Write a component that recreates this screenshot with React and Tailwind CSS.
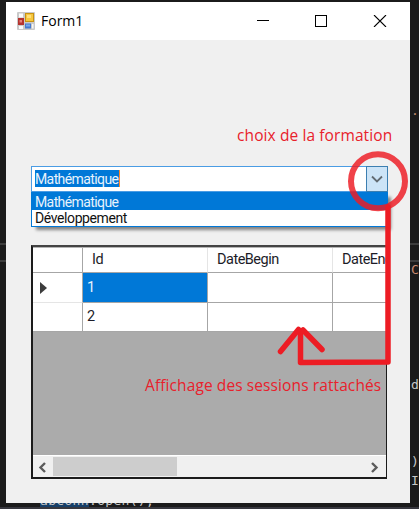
const ui = "font-['Roboto','Liberation_Sans',sans-serif]";
const note = "font-['Open_Sans','Noto_Sans',sans-serif]";

function FormIcon() {
  return (
    <svg width="18" height="18" viewBox="0 0 18 18" className="shrink-0">
      <rect width="18" height="18" rx="1" fill="#c9c9c9" />
      <rect x="2" y="1.5" width="4" height="4" fill="#fafafa" />
      <rect x="1" y="6" width="6" height="7" fill="#b5332e" />
      <rect x="2.5" y="8" width="2.5" height="2.5" fill="#e58078" />
      <rect x="8" y="1" width="9" height="9" fill="#c99312" />
      <rect x="9" y="2" width="7" height="7" fill="#f6c73f" />
      <rect x="10" y="3" width="4" height="3" fill="#ffe078" />
      <rect x="2" y="14" width="4" height="3" fill="#fafafa" />
      <rect x="8" y="11.5" width="6" height="5" fill="#447ad0" />
      <rect x="9" y="12.5" width="4" height="2" fill="#78a8ec" />
      <rect x="15" y="12" width="1.5" height="4.5" fill="#f6f6f6" />
    </svg>
  );
}

function TitleBar() {
  return (
    <div className="flex h-[38px] items-center bg-white pl-[11px]">
      <FormIcon />
      <span className={`${note} ml-1.5 w-[52px] text-[14px] leading-5 text-black`}>Form1</span>
      <svg width="130" height="12" viewBox="0 0 130 12" className="ml-[164px]" fill="none" stroke="#000" shapeRendering="crispEdges">
        <path d="M0 5.5h12M58.5 .5h11v11h-11z" />
        <path d="M117 0l12 12M129 0l-12 12" shapeRendering="auto" strokeWidth="1.1" />
      </svg>
    </div>
  );
}

function Combo() {
  return (
    <div className={`${ui} w-[357px] text-[14px]`}>
      <div className="flex h-[26px] border border-[#4a9ce4] bg-white">
        <div className="flex-1 pt-[3px] pl-[3px]">
          <span className="block h-[17px] w-[85px] border-r border-[#ff8728] bg-[#0078d7] leading-[18px] tracking-[-0.6px] whitespace-nowrap text-[#e8f3fc]">Mathématique</span>
        </div>
        <div className="-my-px -mr-px flex w-[22px] items-center justify-center border border-[#3c7fb1] bg-[#cce4f7]">
          <svg width="12" height="8" viewBox="0 0 12 8" fill="none" stroke="#626b72" strokeWidth="1.8">
            <path d="M1 1.5l5 5 5-5" />
          </svg>
        </div>
      </div>
      <div className="h-[35px] border border-t-0 border-[#0078d7] bg-white shadow-[4px_4px_3px_-1px_rgba(0,0,0,0.45)]">
        <div className="h-[18px] bg-[#0078d7] pl-[3px] leading-[20px] tracking-[-0.6px] text-[#e8f3fc]">Mathématique</div>
        <div className="h-4 pl-[3px] leading-[17px] tracking-[-0.4px] text-[#111]">Développement</div>
      </div>
    </div>
  );
}

function Grid() {
  const line = "border-[#a6a6a6]";
  return (
    <div className={`${ui} flex h-[234px] w-[356px] flex-col overflow-hidden border-2 border-r border-[#1b1b1b] border-t-[#444] bg-[#ababab] text-[14.5px] tracking-[-0.5px] text-[#1c1c28]`}>
      <div className="grid h-[85px] w-[427px] shrink-0 grid-cols-[50px_125px_125px_127px] grid-rows-[25px_30px_29px] border-t border-[#b4b4b4] bg-white">
        <div className={`border-r border-b ${line}`} />
        <div className={`flex items-center border-r border-b border-r-[#e5e5e5] pl-[9px] ${line}`}>Id</div>
        <div className={`flex items-center border-r border-b border-r-[#e5e5e5] pl-[9px] ${line}`}>DateBegin</div>
        <div className={`flex items-center border-b pl-[9px] ${line}`}>DateEnd</div>

        <div className="flex items-center border-r border-b border-r-[#a6a6a6] border-b-[#e5e5e5] pl-[7px]">
          <svg width="7" height="12" viewBox="0 0 7 12"><path d="M0 0l7 6-7 6z" fill="#3c3c3c" /></svg>
        </div>
        <div className={`flex items-center border-r border-b bg-[#0078d7] pl-1 text-[#e8f3fc] ${line}`}>1</div>
        <div className={`border-r border-b ${line}`} />
        <div className={`border-b ${line}`} />

        <div className={`border-r border-b ${line}`} />
        <div className={`flex items-center border-r border-b pl-1 ${line}`}>2</div>
        <div className={`border-r border-b ${line}`} />
        <div className={`border-b ${line}`} />
      </div>
      <div className="flex-1" />
      <div className="flex h-[22px] shrink-0 items-center border-t border-white bg-[#f0f0f0]">
        <svg width="20" height="20" viewBox="0 0 20 20" fill="none" stroke="#5c5c5c" strokeWidth="2.4"><path d="M12 6l-4.500 4.500 4.500 4.500" /></svg>
        <div className="h-[19px] w-[124px] bg-[#cdcdcd]" />
        <svg width="21" height="20" viewBox="0 0 21 20" className="ml-auto" fill="none" stroke="#5c5c5c" strokeWidth="2.4"><path d="M7 6l4.500 4.500-4.500 4.500" /></svg>
      </div>
    </div>
  );
}

export default function App() {
  return (
    <div className="relative h-[509px] w-[419px] overflow-hidden bg-[#1b1b1b]">
      {/* Code editor behind the form */}
      <div className="absolute top-[243px] h-[2px] w-full bg-[#3d3d3d]" />
      <div className="absolute top-[260px] h-[2px] w-full bg-[#3d3d3d]" />
      <div className="absolute top-[507px] h-[2px] w-full bg-[#38383f]" />
      <div className="font-['DejaVu_Sans_Mono',monospace] text-[13px] leading-4 text-[#c8c8c8]">
        <span className="absolute top-[103px] left-[411px] text-[#c08a70]">.</span>
        <span className="absolute top-[262px] left-[411px] text-[#c98a70]">C</span>
        <span className="absolute top-[377px] left-[411px]">d</span>
        <span className="absolute top-[454px] left-[411px]">)</span>
        <span className="absolute top-[473px] left-[411px]">I</span>
        <div className="absolute top-[493px] left-[40px] h-[14px] overflow-hidden whitespace-nowrap">
          <span className="inline-block w-[49px] bg-[#173f68] tracking-[0.3px]">abconn</span>
          <span className="tracking-[0.3px]">.open();</span>
        </div>
      </div>

      {/* Form window */}
      <div className="absolute top-[2px] left-[6px] h-[501px] w-[404px] bg-[#f0f0f0]">
        <TitleBar />
        <div className="flex flex-col pt-[84px] pl-[25px]">
          <span className={`${note} ml-[206px] h-[42px] text-[15.5px] leading-[22px] tracking-[0.1px] whitespace-nowrap text-[#e8212b]`}>choix de la formation</span>
          <Combo />
          <div className="h-[18px]" />
          <Grid />
        </div>
        <span className={`${note} absolute top-[372px] left-[139px] text-[15.5px] leading-[22px] tracking-[0.1px] whitespace-nowrap text-[#e8212b]`}>Affichage des sessions rattachés</span>
      </div>

      {/* Hand-drawn annotations */}
      <svg className="absolute inset-0" width="419" height="509" viewBox="0 0 419 509" fill="none" stroke="#ed1c24" strokeLinecap="round" strokeLinejoin="round">
        <circle cx="378" cy="181.300" r="27" strokeWidth="6" opacity="0.83" />
        <path d="M388 207V362L300.500 362.500V331" strokeWidth="5.500" />
        <path d="M280.500 351.500L298.500 329.500M303 330L322 349.500" strokeWidth="5.500" />
      </svg>
    </div>
  );
}
